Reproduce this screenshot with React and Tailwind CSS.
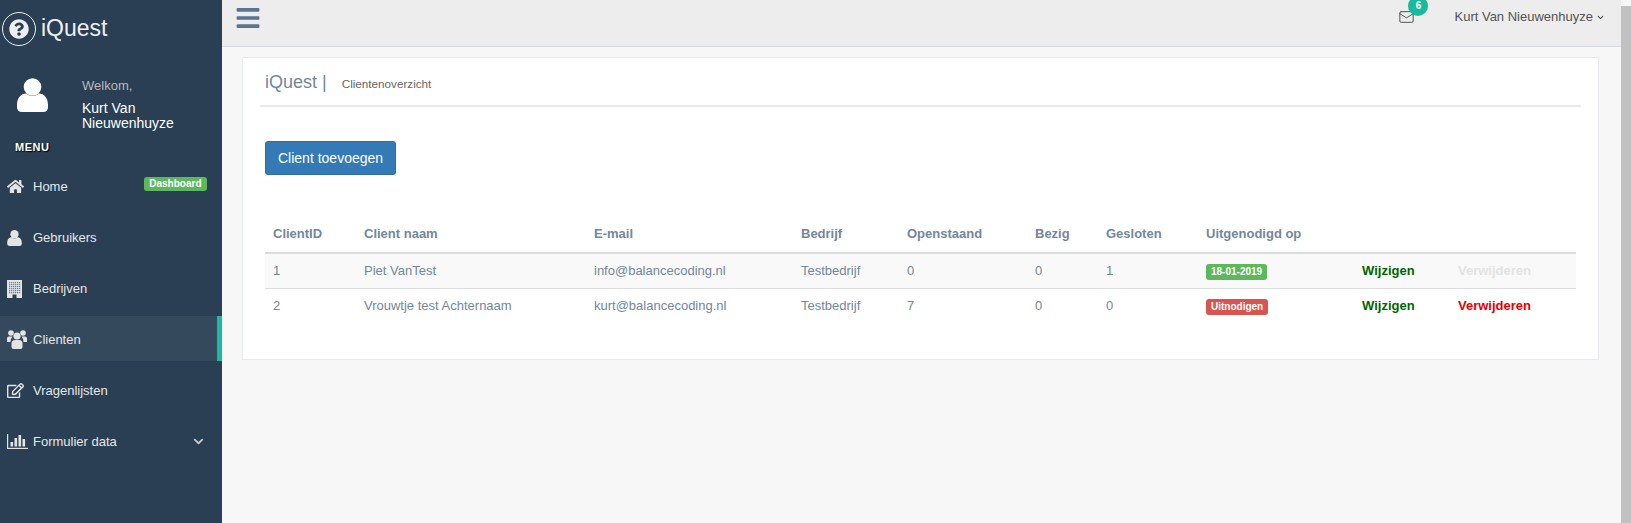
import { FaHome, FaRegEdit, FaChevronDown, FaBars, FaQuestionCircle } from "react-icons/fa";
import { Mail, ChevronDown } from "lucide-react";

function UserGlyph({ className }) {
  return (
    <svg viewBox="0 0 31 34" className={className} fill="currentColor">
      <circle cx="15.5" cy="9" r="8.8" />
      <path d="M0 27C0 20 4 15.5 9 15.5Q15.5 20.5 22 15.5C27 15.5 31 20 31 27V29Q31 34 26 34H5Q0 34 0 29Z" />
    </svg>
  );
}

function BuildingGlyph({ className }) {
  const windows = [];
  for (let y = 2; y < 13; y += 2) {
    for (let x = 2; x < 13; x += 2) {
      windows.push(<rect key={`${x}-${y}`} x={x} y={y} width="1.2" height="1.2" fill="#6b7b8c" />);
    }
  }
  return (
    <svg viewBox="0 0 15 18" className={className}>
      <rect width="15" height="18" fill="currentColor" />
      {windows}
      <rect x="5.5" y="14.5" width="4" height="3.5" fill="#2a3f54" />
    </svg>
  );
}

function UsersGlyph({ className }) {
  return (
    <svg viewBox="0 0 20 19" className={className} fill="currentColor">
      <circle cx="4" cy="3" r="2.8" />
      <circle cx="16" cy="3" r="2.8" />
      <path d="M0 12V8.5Q0 6.5 2 6.5H5.5Q3.5 8.5 3.5 12Z" />
      <path d="M20 12V8.5Q20 6.5 18 6.5H14.5Q16.5 8.5 16.5 12Z" />
      <circle cx="10" cy="6" r="3.6" />
      <path d="M4.5 17V13.5Q4.5 10 8 10H12Q15.5 10 15.5 13.5V17Q15.5 19 13.5 19H6.5Q4.5 19 4.5 17Z" />
    </svg>
  );
}

function ChartGlyph({ className }) {
  return (
    <svg viewBox="0 0 21 15" className={className} fill="currentColor">
      <rect x="0" y="0" width="1.2" height="15" />
      <rect x="0" y="13.8" width="21" height="1.2" />
      <rect x="3.5" y="8" width="2.6" height="4.5" />
      <rect x="7.5" y="4" width="2.6" height="8.5" />
      <rect x="11.5" y="1" width="2.6" height="11.5" />
      <rect x="15.5" y="5" width="2.6" height="7.5" />
    </svg>
  );
}

const menu = [
  { label: "Home", icon: <FaHome className="text-[17px]" /> },
  { label: "Gebruikers", icon: <UserGlyph className="w-[15px] h-[16px]" /> },
  { label: "Bedrijven", icon: <BuildingGlyph className="w-[15px] h-[18px]" /> },
  { label: "Clienten", icon: <UsersGlyph className="w-[20px] h-[19px]" />, active: true },
  { label: "Vragenlijsten", icon: <FaRegEdit className="text-[17px]" /> },
  { label: "Formulier data", icon: <ChartGlyph className="w-[21px] h-[15px]" />, chevron: true },
];

const rows = [
  { id: 1, name: "Piet VanTest", email: "info@balancecoding.nl", company: "Testbedrijf", open: 0, busy: 0, closed: 1, invited: "18-01-2019" },
  { id: 2, name: "Vrouwtje test Achternaam", email: "kurt@balancecoding.nl", company: "Testbedrijf", open: 7, busy: 0, closed: 0 },
];

const headers = ["ClientID", "Client naam", "E-mail", "Bedrijf", "Openstaand", "Bezig", "Gesloten", "Uitgenodigd op", "", ""];

function Sidebar() {
  return (
    <aside className="w-[222px] shrink-0 bg-[#2a3f54] text-[#ecf0f1] flex flex-col">
      <div className="h-[57px] flex items-center pl-0.5 gap-[5px]">
        <div className="w-[34px] h-[34px] rounded-full border border-[#ecf0f1] flex items-center justify-center">
          <FaQuestionCircle className="text-[20px]" />
        </div>
        <span className="text-[23px] leading-none text-[#ecf0f1]">iQuest</span>
      </div>
      <div className="flex pl-[17px] pt-[21px] h-[84px]">
        <UserGlyph className="w-[31px] h-[34px] text-white shrink-0" />
        <div className="ml-[34px] -mt-px">
          <div className="text-[13px] leading-[18px] text-[#bab8b8]">Welkom,</div>
          <div className="text-sm leading-[15px] text-white mt-[6px]">Kurt Van<br />Nieuwenhuyze</div>
        </div>
      </div>
      <div className="pl-[15px] mt-[-1px] text-[11px] leading-[14px] font-bold tracking-[0.5px] text-white [text-shadow:1px_1px_1px_#000]">MENU</div>
      <nav className="mt-[9px]">
        {menu.map((item) => (
          <div key={item.label} className={`relative flex items-center h-[45px] pt-[2px] mb-[6px] pl-[7px] text-[13px] ${item.active ? "bg-[#35495d] border-r-[5px] border-[#1abb9c]" : ""}`}>
            <span className="w-[26px] shrink-0 text-[#e4e4e4]">{item.icon}</span>
            <span className="text-[#e7e7e7]">{item.label}</span>
            {item.label === "Home" && (
              <span className="absolute right-[15px] top-[14px] bg-[#5cb85c] text-white text-[10px] leading-[12px] font-bold px-[5.5px] py-px rounded-[3px]">Dashboard</span>
            )}
            {item.chevron && <FaChevronDown className="absolute right-[18px] top-[18px] text-[11px] text-[#c5ccd3]" />}
          </div>
        ))}
      </nav>
    </aside>
  );
}

function Topbar() {
  return (
    <header className="h-[47px] shrink-0 bg-[#ededed] border-b border-[#d9dee4] flex items-start text-[#515356]">
      <FaBars className="ml-[13px] mt-[5px] text-[26px] text-[#5a738e]" />
      <div className="ml-auto relative mt-[9px] mr-[39px]">
        <Mail className="w-[17px] h-[16px] text-[#515356]" strokeWidth={1.5} />
        <span className="absolute left-[10px] top-[-13px] w-[20px] h-[20px] rounded-full bg-[#1abb9c] text-white text-[10px] leading-[20px] text-center font-bold">6</span>
      </div>
      <div className="flex items-center gap-[3px] mt-[7px] mr-[16px] text-[13px] leading-[20px] text-[#515356]">
        Kurt Van Nieuwenhuyze
        <ChevronDown className="w-[9px] h-[9px]" strokeWidth={3} />
      </div>
    </header>
  );
}

function StatusBadge({ invited }) {
  return (
    <span className={`inline-block text-white text-[10px] leading-[12px] font-bold px-[5px] py-[2px] rounded-[3px] align-middle ${invited ? "bg-[#5cb85c]" : "bg-[#d9534f]"}`}>
      {invited || "Uitnodigen"}
    </span>
  );
}

function ClientTable() {
  return (
    <table className="w-[1311px] ml-[22px] mt-[41px] table-fixed border-collapse text-[13px] text-[#73879c]">
      <colgroup>
        <col className="w-[91px]" />
        <col className="w-[230px]" />
        <col className="w-[207px]" />
        <col className="w-[106px]" />
        <col className="w-[128px]" />
        <col className="w-[71px]" />
        <col className="w-[100px]" />
        <col className="w-[156px]" />
        <col className="w-[96px]" />
        <col />
      </colgroup>
      <thead>
        <tr className="border-b-2 border-[#dddddd]">
          {headers.map((h, i) => (
            <th key={i} className="px-2 py-2 h-[37px] text-left font-bold">{h}</th>
          ))}
        </tr>
      </thead>
      <tbody>
        {rows.map((r, i) => (
          <tr key={r.id} className={`h-[35px] ${i === 0 ? "bg-[#f9f9f9] border-b border-[#dddddd]" : ""}`}>
            <td className="px-2">{r.id}</td>
            <td className="px-2">{r.name}</td>
            <td className="px-2">{r.email}</td>
            <td className="px-2">{r.company}</td>
            <td className="px-2">{r.open}</td>
            <td className="px-2">{r.busy}</td>
            <td className="px-2">{r.closed}</td>
            <td className="px-2"><StatusBadge invited={r.invited} /></td>
            <td className="px-2 font-bold text-[#006400]">Wijzigen</td>
            <td className={`px-2 font-bold ${r.invited ? "text-[#e3e3e3]" : "text-[#e60000]"}`}>Verwijderen</td>
          </tr>
        ))}
      </tbody>
    </table>
  );
}

export default function App() {
  return (
    <div className="flex h-[523px] overflow-hidden bg-[#f7f7f7] font-['Liberation_Sans',Arial,sans-serif]">
      <Sidebar />
      <main className="flex-1 flex flex-col min-w-0">
        <Topbar />
        <div className="pt-[10px] pl-[20px] pr-[22px]">
          <section className="h-[303px] bg-white border border-[#e6e9ed]">
            <div className="mx-[17px] h-[49px] border-b-2 border-[#e6e9ed] flex items-center pl-[5px]">
              <span className="text-lg mt-[1px] text-[#73879c]">iQuest |</span>
              <span className="ml-[15px] mt-[4px] text-[11.7px] text-[#666666]">Clientenoverzicht</span>
            </div>
            <button className="ml-[22px] mt-[34px] h-[34px] px-[12px] bg-[#337ab7] border border-[#2e6da4] rounded-[3px] text-white text-sm block">Client toevoegen</button>
            <ClientTable />
          </section>
        </div>
      </main>
      <div className="w-[10px] shrink-0 mt-[6px] bg-[#c1c1c1]" />
    </div>
  );
}
